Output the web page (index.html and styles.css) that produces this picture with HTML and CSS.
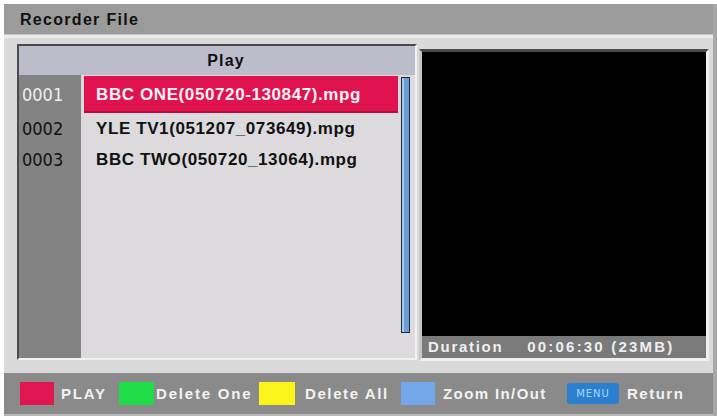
FILE: index.html
```html
<!DOCTYPE html>
<html>
<head>
<meta charset="utf-8">
<link rel="stylesheet" href="styles.css">
</head>
<body>
<div class="screen">
  <div class="titlebar">Recorder File</div>
  <div class="main">
    <div class="list">
      <div class="list-head">Play</div>
      <div class="list-body">
        <div class="nums">
          <div class="num first sel">0001</div>
          <div class="num second">0002</div>
          <div class="num">0003</div>
        </div>
        <div class="files">
          <div class="rows">
            <div class="row first sel">BBC ONE(050720-130847).mpg</div>
            <div class="row second">YLE TV1(051207_073649).mpg</div>
            <div class="row">BBC TWO(050720_13064).mpg</div>
          </div>
          <div class="scrollbar"></div>
        </div>
      </div>
    </div>
    <div class="preview">
      <div class="video"></div>
      <div class="duration"><span class="dur-label">Duration</span><span class="dur-value">00:06:30 (23MB)</span></div>
    </div>
  </div>
  <div class="footer">
    <span class="sw red"></span><span class="lbl l-play">PLAY</span>
    <span class="sw green"></span><span class="lbl l-one">Delete One</span>
    <span class="sw yellow"></span><span class="lbl l-all">Delete All</span>
    <span class="sw blue"></span><span class="lbl l-zoom">Zoom In/Out</span>
    <span class="menu">MENU</span><span class="lbl l-ret">Return</span>
  </div>
</div>
</body>
</html>
```

FILE: styles.css
```css
html, body {
  margin: 0;
  padding: 0;
  background: #ffffff;
}

body {
  font-family: "Liberation Sans", Arial, sans-serif;
  width: 717px;
  height: 418px;
  overflow: hidden;
}

.screen {
  margin: 4px 0 0 4px;
  width: 709px;
  background: #dadada;
  display: flex;
  flex-direction: column;
  border-right: 4px solid #a8a8a8;
}

.titlebar {
  height: 31px;
  line-height: 31px;
  background: #9b9b9b;
  border-bottom: 1px solid #c4c4c4;
  padding-left: 16px;
  font-weight: bold;
  font-size: 16px;
  letter-spacing: 1.3px;
  color: #111;
  box-sizing: border-box;
}

.main {
  display: flex;
  padding-left: 13px;
  align-items: flex-start;
  border-top: 3px solid #ececec;
}

.list {
  margin-top: 6px;
  width: 400px;
  height: 316px;
  box-sizing: border-box;
  border-top: 2px solid #4a4a4a;
  border-left: 2px solid #4a4a4a;
  border-right: 2px solid #f2f2f2;
  border-bottom: 2px solid #f2f2f2;
  display: flex;
  flex-direction: column;
}

.list-head {
  height: 29px;
  line-height: 29px;
  background: #bcbcca;
  text-align: center;
  padding-left: 18px;
  font-weight: bold;
  font-size: 16px;
  letter-spacing: 1.2px;
  color: #111;
}

.list-body {
  flex: 1;
  display: flex;
}

.nums {
  width: 62px;
  background: #838383;
  padding-top: 1px;
}

.num {
  height: 30px;
  line-height: 30px;
  padding-left: 3px;
  font-family: "DejaVu Sans Condensed", "DejaVu Sans", sans-serif;
  font-stretch: condensed;
  font-size: 18px;
  color: #111;
}

.num.first { height: 37px; line-height: 37px; }
.num.second { height: 32px; line-height: 32px; }
.num.sel { color: #eeeeee; }

.files {
  flex: 1;
  display: flex;
  background: #dcdadd;
  padding-left: 3px;
  padding-top: 1px;
}

.rows {
  width: 314px;
}

.row {
  height: 30px;
  line-height: 30px;
  padding-left: 12px;
  font-weight: bold;
  font-size: 17px;
  letter-spacing: 0.6px;
  color: #111;
  white-space: nowrap;
}

.row.first { height: 37px; line-height: 37px; }
.row.second { height: 32px; line-height: 32px; }

.row.sel {
  background: #e0124f;
  color: #fff4f6;
  box-shadow: inset 0 -2px 0 #b80c3e;
}

.scrollbar {
  margin-left: 3px;
  margin-top: 1px;
  width: 9px;
  height: 256px;
  box-sizing: border-box;
  border: 1px solid #1e2838;
  background: #6c9fd9;
  box-shadow: inset 2px 0 0 #a8c8ee;
}

.preview {
  margin-top: 11px;
  margin-left: 2px;
  width: 290px;
  box-sizing: border-box;
  border-top: 3px solid #4a4a4a;
  border-left: 3px solid #c8c8c8;
  border-right: 3px solid #f0f0f0;
  border-bottom: 3px solid #f0f0f0;
}

.video {
  height: 284px;
  background: #000;
}

.duration {
  height: 22px;
  line-height: 22px;
  background: #7a7a7a;
  padding-left: 6px;
  font-weight: bold;
  font-size: 15px;
  letter-spacing: 1.7px;
  color: #efefef;
  white-space: nowrap;
}

.dur-value {
  margin-left: 24px;
  letter-spacing: 2.2px;
}

.footer {
  margin-top: 12px;
  height: 43px;
  background: #8a8a8a;
  display: flex;
  align-items: center;
  padding-left: 16px;
  border-bottom: 2px solid #b8b8b8;
  box-sizing: border-box;
}

.sw {
  display: block;
  width: 34px;
  height: 23px;
  flex: none;
}

.red { background: #e0164f; }
.green { background: #20dc48; margin-left: 11px; width: 35px; }
.yellow { background: #faf41a; margin-left: 7px; width: 36px; }
.blue { background: #72a8ea; margin-left: 12px; }

.lbl {
  font-weight: bold;
  font-size: 15px;
  letter-spacing: 1.8px;
  color: #f2f2f2;
  white-space: nowrap;
  flex: none;
}

.l-play { margin-left: 7px; width: 47px; }
.l-one { margin-left: 2px; width: 96px; }
.l-all { margin-left: 10px; width: 84px; letter-spacing: 1.6px; }
.l-zoom { margin-left: 8px; width: 103px; letter-spacing: 1.4px; }
.l-ret { margin-left: 8px; letter-spacing: 1.5px; }

.menu {
  margin-left: 21px;
  width: 52px;
  height: 21px;
  line-height: 21px;
  border-radius: 3px;
  background: #2a7fd0;
  color: #a6d6ff;
  font-family: "DejaVu Sans", sans-serif;
  font-size: 10px;
  letter-spacing: 1px;
  text-align: center;
  flex: none;
}
```
